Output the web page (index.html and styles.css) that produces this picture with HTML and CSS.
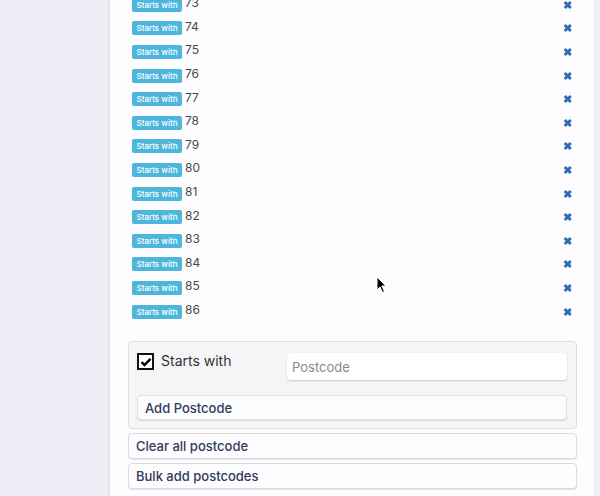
FILE: index.html
```html
<!DOCTYPE html>
<html>
<head>
<meta charset="utf-8">
<link rel="stylesheet" href="styles.css">
</head>
<body>
<div class="page">
  <div class="panel">
    <ul class="list">
      <li class="row"><span class="badge">Starts with</span><span class="code">73</span><span class="x">✖</span></li>
      <li class="row"><span class="badge">Starts with</span><span class="code">74</span><span class="x">✖</span></li>
      <li class="row"><span class="badge">Starts with</span><span class="code">75</span><span class="x">✖</span></li>
      <li class="row"><span class="badge">Starts with</span><span class="code">76</span><span class="x">✖</span></li>
      <li class="row"><span class="badge">Starts with</span><span class="code">77</span><span class="x">✖</span></li>
      <li class="row"><span class="badge">Starts with</span><span class="code">78</span><span class="x">✖</span></li>
      <li class="row"><span class="badge">Starts with</span><span class="code">79</span><span class="x">✖</span></li>
      <li class="row"><span class="badge">Starts with</span><span class="code">80</span><span class="x">✖</span></li>
      <li class="row"><span class="badge">Starts with</span><span class="code">81</span><span class="x">✖</span></li>
      <li class="row"><span class="badge">Starts with</span><span class="code">82</span><span class="x">✖</span></li>
      <li class="row"><span class="badge">Starts with</span><span class="code">83</span><span class="x">✖</span></li>
      <li class="row"><span class="badge">Starts with</span><span class="code">84</span><span class="x">✖</span></li>
      <li class="row"><span class="badge">Starts with</span><span class="code">85</span><span class="x">✖</span></li>
      <li class="row"><span class="badge">Starts with</span><span class="code">86</span><span class="x">✖</span></li>
    </ul>
    <div class="form">
      <div class="form-top">
        <label class="check"><span class="box"><svg width="12" height="10" viewBox="0 0 12 10"><path d="M1.5 5.2 L4.5 8 L10.5 1.8" fill="none" stroke="#000" stroke-width="2.4"/></svg></span>Starts with</label>
        <input class="input" type="text" placeholder="Postcode">
      </div>
      <button class="btn inner">Add Postcode</button>
    </div>
    <button class="btn">Clear all postcode</button>
    <button class="btn">Bulk add postcodes</button>
  </div>
  <svg class="cursor" width="12" height="18" viewBox="0 0 12 18"><path d="M1 1 L1 14 L4 11 L6.5 16.5 L8.5 15.5 L6 10 L10 10 Z" fill="#000" stroke="#fff" stroke-width="1"/></svg>
</div>
</body>
</html>
```
FILE: styles.css
```css
html, body { margin: 0; padding: 0; }
body {
  background: #eeeff6;
  font-family: "Inter", "Open Sans", sans-serif;
  width: 600px;
  height: 496px;
  overflow: hidden;
}
.page { position: relative; height: 496px; }
.panel {
  margin-left: 110px;
  width: 484px;
  height: 520px;
  margin-top: -7px;
  background: #fdfcfe;
  box-shadow: -1px 0 3px rgba(0,0,0,0.08);
  padding-left: 18px;
  padding-right: 17px;
  box-sizing: border-box;
}
.list { list-style: none; margin: 0; padding: 0 0 0 4px; }
.row {
  height: 23.6px;
  display: flex;
  align-items: center;
}
.badge {
  background: #4db6dc;
  color: #fff;
  font-size: 8px;
  font-weight: 500;
  border-radius: 2px;
  height: 14px;
  line-height: 14px;
  width: 50px;
  text-align: center;
  box-sizing: border-box;
}
.code {
  margin-left: 3px;
  font-size: 12px;
  color: #4a4a4a;
  flex: 1;
  position: relative;
  top: -2px;
}
.x {
  color: #2f6db3;
  font-size: 11px;
  margin-right: 5px;
  font-weight: bold;
}
.form {
  margin-top: 18px;
  background: #f5f5f7;
  border: 1px solid #dcdcdf;
  border-radius: 4px;
  padding: 11px 9px 8px 8px;
  height: 88px;
  box-sizing: border-box;
  width: 449px;
}
.form-top { display: flex; height: 28px; }
.check {
  display: flex;
  align-items: flex-start;
  font-size: 14px;
  color: #333;
  width: 150px;
  line-height: 16px;
}
.box {
  width: 17px;
  height: 17px;
  border: 2px solid #111;
  box-sizing: border-box;
  margin-right: 7px;
  display: flex;
  align-items: center;
  justify-content: center;
  background: #fff;
}
.input {
  flex: 1;
  height: 27px;
  border: none;
  border-radius: 4px;
  background: #fff;
  box-shadow: 0 1px 2px rgba(0,0,0,0.18);
  font-family: inherit;
  font-size: 13px;
  padding: 0 5px;
  outline: none;
}
.input::placeholder { color: #8a8a8a; }
.btn {
  display: block;
  width: 449px;
  height: 26px;
  margin-top: 4px;
  border: 1px solid #dcdcdf;
  border-radius: 4px;
  background: #fdfcfe;
  box-shadow: 0 1px 1px rgba(0,0,0,0.1);
  text-align: left;
  padding: 0 7px;
  font-family: inherit;
  font-size: 13px;
  font-weight: 500;
  color: #2f3b5a;
}
.btn.inner {
  width: 430px;
  height: 25px;
  margin-top: 14px;
  border-color: #e2e2e5;
}
.cursor {
  position: absolute;
  left: 376px;
  top: 283px;
}
```
